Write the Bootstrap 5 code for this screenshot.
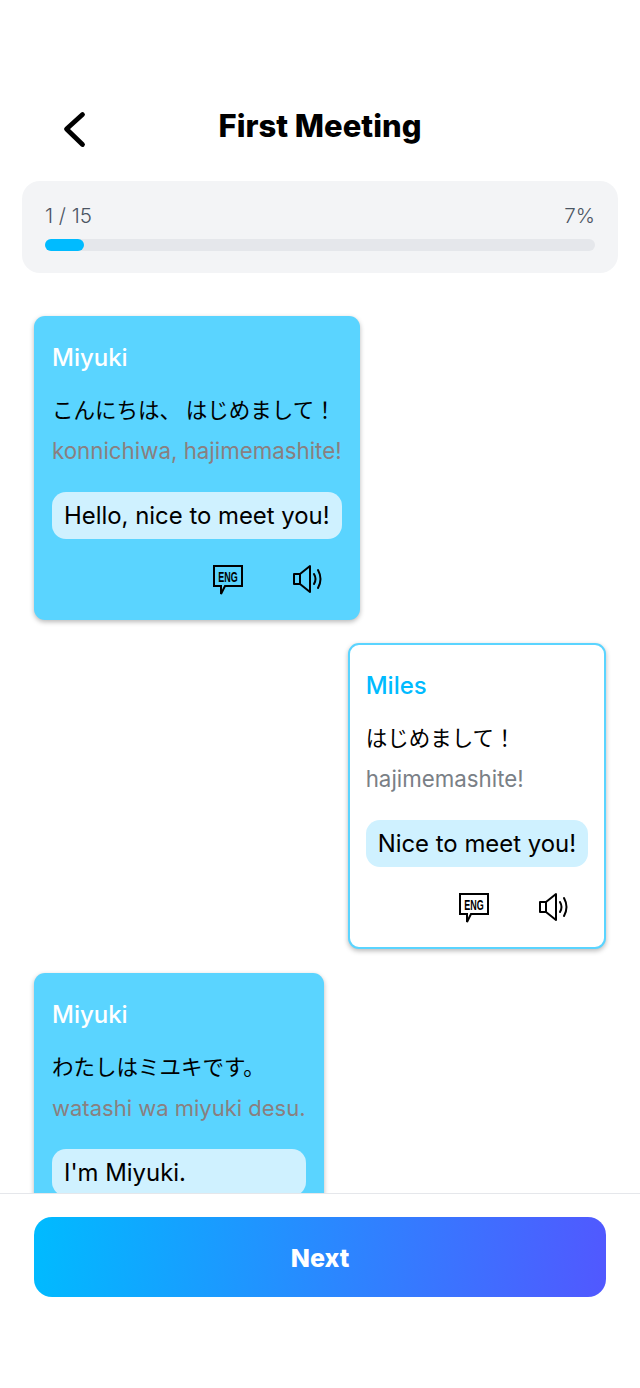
<!DOCTYPE html>
<html lang="en">
<head>
    <meta charset="UTF-8">
    <meta name="viewport" content="width=device-width, initial-scale=1.0">
    <title>First Meeting</title>
    <link href="https://cdn.jsdelivr.net/npm/bootstrap@5.3.3/dist/css/bootstrap.min.css" rel="stylesheet">
    <style>
        body { font-family: Inter, "Noto Sans CJK JP", sans-serif; color: #000; background: #fff; }
        .phone { width: 640px; height: 1388px; overflow: hidden; }
        .top-bar { height: 181px; padding: 92px 0 0 0; flex-shrink: 0; }
        .back-btn { left: 59px; top: 108px; line-height: 0; }
        .page-title { font-size: 31px; font-weight: 800; line-height: 36px; margin: 0; }
        .progress-box { margin: 0 22px; height: 92px; background: #f3f4f6; border-radius: 18px; padding: 23px 23px 0; flex-shrink: 0; }
        .progress-label { font-size: 20.5px; line-height: 24px; color: #4b5563; font-weight: 300; }
        .track { height: 12px; margin-top: 11px; background: #e5e7eb; border-radius: 6px; }
        .track-fill { height: 12px; background: #00bbff; border-radius: 6px; }
        .chat-area { padding: 43px 34px 0; gap: 23px; overflow: hidden; min-height: 0; }
        .bubble { padding: 26px 18px 0 18px; border-radius: 11px; height: 304px; flex-shrink: 0; box-shadow: 0 2px 5px rgba(0,0,0,.28); }
        .bubble-in { background: #5ad4ff; }
        .bubble-out { background: #fff; border: 2px solid #5ad4ff; padding: 25px 16px 0 16px; height: 306px; }
        .bubble-last { margin-top: 1px; }
        .speaker { font-size: 24px; line-height: 32px; font-weight: 500; color: #fff; }
        .bubble-out .speaker { color: #00bbff; }
        .jp-line { font-family: "Noto Sans CJK JP", sans-serif; font-size: 21.5px; line-height: 32px; margin-top: 19px; white-space: nowrap; }
        .romaji { font-size: 22.3px; line-height: 32px; margin-top: 10px; color: #8a7f80; white-space: nowrap; }
        .bubble-out .romaji { color: #7a8086; }
        .bubble-last .romaji { font-size: 22px; }
        .meaning { background: #cff1ff; border-radius: 14px; font-size: 23.9px; line-height: 32px; padding: 7.5px 12px; margin-top: 25px; white-space: nowrap; }
        .tool-row { margin-top: 24px; height: 32px; padding-right: 18px; gap: 48px; }
        .eng-text { font-family: "Liberation Sans", sans-serif; font-size: 15px; font-weight: 700; }
        .bottom-bar { height: 195px; border-top: 1px solid #e5e7eb; padding: 23px 34px 0; flex-shrink: 0; background: #fff; z-index: 1; }
        .next-btn { height: 80px; width: 100%; border: 0; border-radius: 18px; padding-top: 10px; color: #fff; font-size: 25px; font-weight: 800; background: linear-gradient(95deg, #00bbff 0%, #5158ff 100%); }
    </style>
</head>
<body>
    <div class="phone d-flex flex-column position-relative">
        <div class="top-bar text-center">
            <a class="back-btn position-absolute" href="#" aria-label="Back">
                <svg width="30" height="40" viewBox="0 0 30 40"><path d="M23.500 6.500 L7.500 21 L23.500 36.500" fill="none" stroke="#000" stroke-width="4.800" stroke-linecap="round" stroke-linejoin="round"/></svg>
            </a>
            <h1 class="page-title mt-3">First Meeting</h1>
        </div>

        <div class="progress-box">
            <div class="d-flex justify-content-between progress-label">
                <span>1 / 15</span>
                <span>7%</span>
            </div>
            <div class="track"><div class="track-fill" style="width: 7%"></div></div>
        </div>

        <div class="chat-area d-flex flex-column flex-grow-1">
            <div class="bubble bubble-in align-self-start">
                <div class="speaker">Miyuki</div>
                <div class="jp-line">こんにちは、 はじめまして！</div>
                <div class="romaji">konnichiwa, hajimemashite!</div>
                <div class="meaning">Hello, nice to meet you!</div>
                <div class="tool-row d-flex justify-content-end align-items-center">
                    <svg width="32" height="32" viewBox="0 0 32 32"><path d="M2 3 H30 V23 H13 L9 31 V23 H2 Z" fill="none" stroke="#000" stroke-width="2"/><text class="eng-text" transform="translate(16 18.500) scale(.6 1)" text-anchor="middle">ENG</text></svg>
                    <svg width="32" height="32" viewBox="0 0 32 32"><path d="M2 11 H8 V21 H2 Z M8 11 L18 3 V29 L8 21" fill="none" stroke="#000" stroke-width="2" stroke-linejoin="round"/><path d="M22 11 Q25 16 22 21 M26 7 Q31 16 26 25" fill="none" stroke="#000" stroke-width="2" stroke-linecap="round"/></svg>
                </div>
            </div>

            <div class="bubble bubble-out align-self-end">
                <div class="speaker">Miles</div>
                <div class="jp-line">はじめまして！</div>
                <div class="romaji">hajimemashite!</div>
                <div class="meaning">Nice to meet you!</div>
                <div class="tool-row d-flex justify-content-end align-items-center">
                    <svg width="32" height="32" viewBox="0 0 32 32"><path d="M2 3 H30 V23 H13 L9 31 V23 H2 Z" fill="none" stroke="#000" stroke-width="2"/><text class="eng-text" transform="translate(16 18.500) scale(.6 1)" text-anchor="middle">ENG</text></svg>
                    <svg width="32" height="32" viewBox="0 0 32 32"><path d="M2 11 H8 V21 H2 Z M8 11 L18 3 V29 L8 21" fill="none" stroke="#000" stroke-width="2" stroke-linejoin="round"/><path d="M22 11 Q25 16 22 21 M26 7 Q31 16 26 25" fill="none" stroke="#000" stroke-width="2" stroke-linecap="round"/></svg>
                </div>
            </div>

            <div class="bubble bubble-in bubble-last align-self-start">
                <div class="speaker">Miyuki</div>
                <div class="jp-line">わたしはミユキです。</div>
                <div class="romaji">watashi wa miyuki desu.</div>
                <div class="meaning">I'm Miyuki.</div>
            </div>
        </div>

        <div class="bottom-bar">
            <button type="button" class="btn next-btn">Next</button>
        </div>
    </div>
    <script src="https://cdn.jsdelivr.net/npm/bootstrap@5.3.3/dist/js/bootstrap.bundle.min.js"></script>
</body>
</html>
